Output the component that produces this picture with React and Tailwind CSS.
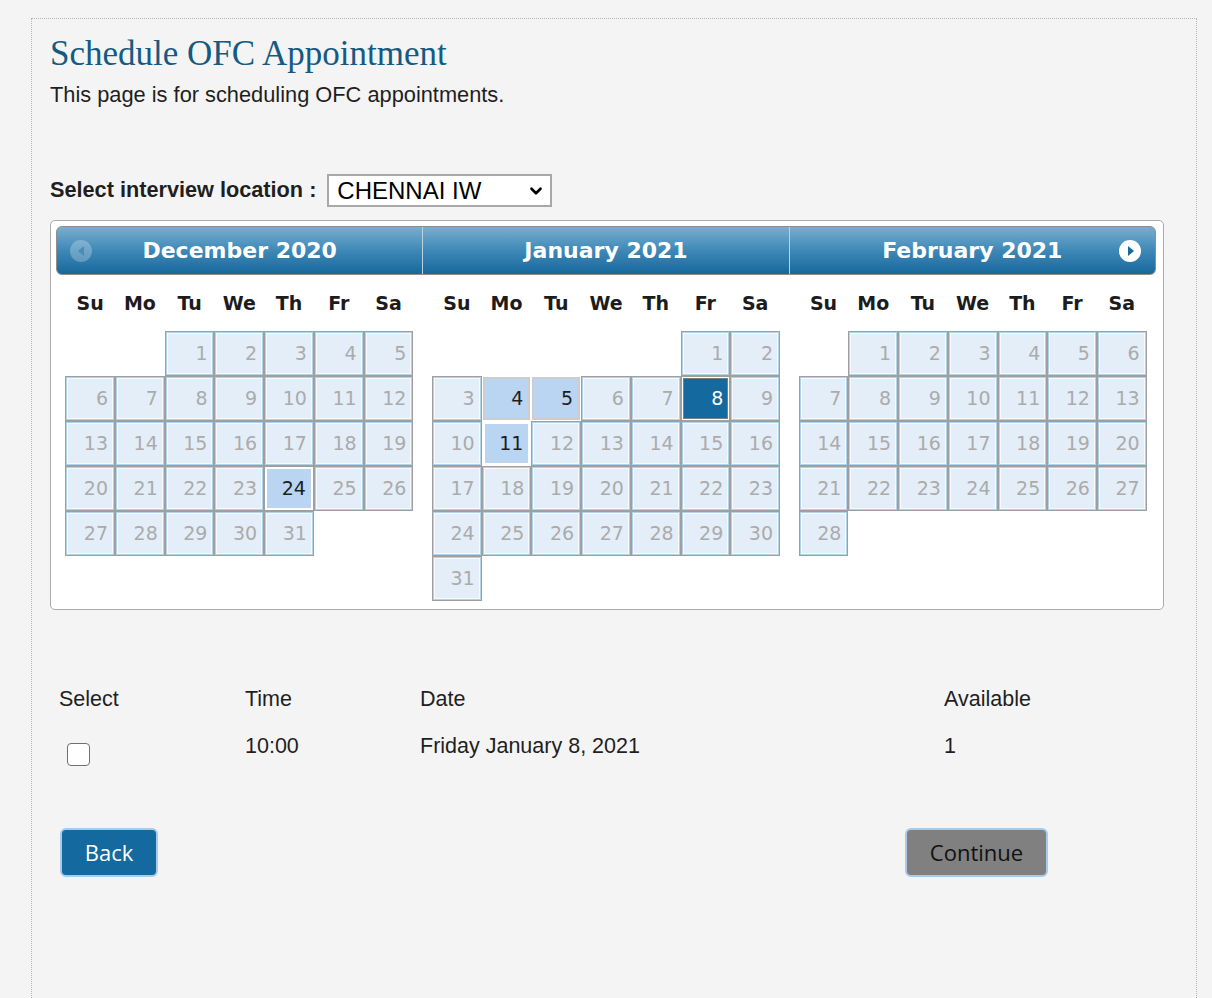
import React from "react";
import { ChevronDown } from "lucide-react";

const months = [
  { name: "December 2020", offset: 2, days: 31, marks: { 24: "dec" } },
  {
    name: "January 2021",
    offset: 5,
    days: 31,
    marks: { 4: "soft", 5: "soft", 8: "picked", 11: "open" },
  },
  { name: "February 2021", offset: 1, days: 28, marks: {} },
];

const weekDays = ["Su", "Mo", "Tu", "We", "Th", "Fr", "Sa"];

const DayCell = ({ day, mark }) => {
  const outer =
    mark === "soft" || mark === "open" ? "border-white" : "border-[#9f9f9f]";
  let inner =
    "border border-[#b2d3e5] bg-[#e4eef9] text-[#ababab] shadow-[inset_0_0_0_1px_#f6f9fd]";
  if (mark === "dec" || mark === "open")
    inner = "border-2 border-white bg-[#b9d5f2] text-[#1e1e1e]";
  if (mark === "soft")
    inner = "border-2 border-[#cdcdcd] bg-[#b9d5f2] text-[#1e1e1e]";
  if (mark === "picked")
    inner =
      "border border-white bg-[#14699e] text-white shadow-[inset_0_0_0_1px_#7d7d7d]";

  return (
    <div className={`border ${outer}`}>
      <div
        className={`h-full flex items-center justify-end pr-[5px] ${inner}`}
      >
        {day}
      </div>
    </div>
  );
};

const MonthGrid = ({ month }) => {
  const cells = [];
  for (let i = 0; i < month.offset; i++) cells.push(<div key={`e${i}`} />);
  for (let d = 1; d <= month.days; d++)
    cells.push(<DayCell key={d} day={d} mark={month.marks[d]} />);

  return (
    <div className="flex-1 flex flex-col items-center">
      <div className="grid grid-cols-7 w-[348px] h-[56px] items-center text-center font-bold text-[19px] text-[#1c1c1c]">
        {weekDays.map((w) => (
          <span key={w}>{w}</span>
        ))}
      </div>
      <div className="grid grid-cols-7 w-[348px] auto-rows-[45px] text-[19px]">
        {cells}
      </div>
    </div>
  );
};

const Calendar = () => (
  <div className="mt-[13px] w-[1114px] rounded-[5px] border border-[#ababab] bg-white pl-[5px] pr-[7px] pt-[5px] pb-[8px] font-['DejaVu_Sans',Verdana,sans-serif]">
    {/* Month header bar */}
    <div className="flex h-[49px] rounded-[6px] border border-[#8e8e8e] bg-linear-to-b from-[#77afce] via-[#3e88b7] via-50% to-[#15689b] overflow-hidden">
      {months.map((m, i) => (
        <div
          key={m.name}
          className={`relative flex-1 flex items-center justify-center text-white font-bold text-[22px] ${
            i > 0 ? "border-l border-[#b9d2e3]" : ""
          }`}
        >
          {i === 0 && (
            <span className="absolute left-[13px] top-1/2 -translate-y-1/2 w-[22px] h-[22px] rounded-full bg-white/25 flex items-center justify-center">
              <svg width="8" height="10" viewBox="0 0 8 10">
                <path d="M7 0 L1 5 L7 10 Z" fill="#3f86b3" opacity="0.8" />
              </svg>
            </span>
          )}
          {m.name}
          {i === 2 && (
            <span className="absolute right-[14px] top-1/2 -translate-y-1/2 w-[22px] h-[22px] rounded-full bg-white flex items-center justify-center">
              <svg width="8" height="10" viewBox="0 0 8 10" className="ml-[2px]">
                <path d="M1 0 L7 5 L1 10 Z" fill="#17699c" />
              </svg>
            </span>
          )}
        </div>
      ))}
    </div>

    {/* Month grids */}
    <div className="flex">
      {months.map((m) => (
        <MonthGrid key={m.name} month={m} />
      ))}
    </div>
  </div>
);

export default function App() {
  return (
    <div className="min-h-screen bg-[#f4f4f4] pt-[18px] pl-[31px] pr-[15px] overflow-hidden">
      <div className="min-h-[1000px] border border-dotted border-[#b4b4b4] pl-[18px] text-[#1f1f1f] font-['Liberation_Sans',Arial,sans-serif]">
        <h1 className="mt-[15px] h-[40px] leading-[40px] text-[35px] text-[#155a82] font-['Liberation_Serif',Georgia,serif]">
          Schedule OFC Appointment
        </h1>
        <p className="mt-[9px] leading-[24px] text-[21.8px]">
          This page is for scheduling OFC appointments.
        </p>

        {/* Location select */}
        <div className="mt-[67px] flex items-center h-[33px]">
          <span className="font-bold text-[21.7px] mr-[11px]">
            Select interview location :
          </span>
          <div className="w-[225px] h-[33px] border-2 border-[#a8a8a8] bg-white flex items-center pl-[8px] pr-[5px]">
            <span className="flex-1 text-[24px] text-black leading-none">
              CHENNAI IW
            </span>
            <ChevronDown size={18} strokeWidth={3.5} className="text-black" />
          </div>
        </div>

        <Calendar />

        {/* Slots table */}
        <div className="pl-[9px] text-[21.5px]">
          <div className="mt-[77px] grid grid-cols-[186px_175px_524px_1fr] leading-[24px]">
            <span>Select</span>
            <span>Time</span>
            <span>Date</span>
            <span>Available</span>
          </div>
          <div className="mt-[23px] grid grid-cols-[186px_175px_524px_1fr] leading-[24px] items-start">
            <div className="pl-[8px] pt-[9px]">
              <input
                type="checkbox"
                className="appearance-none block w-[23px] h-[23px] rounded-[4px] border border-[#707070] bg-white"
              />
            </div>
            <span>10:00</span>
            <span>Friday January 8, 2021</span>
            <span>1</span>
          </div>
        </div>

        {/* Buttons */}
        <div className="mt-[62px] ml-[10px] w-[988px] flex justify-between font-['Open_Sans',sans-serif] text-[22px]">
          <button className="w-[98px] h-[49px] rounded-[6px] border-2 border-[#a9cbea] bg-[#14699e] text-white">
            Back
          </button>
          <button className="w-[143px] h-[49px] rounded-[6px] border-2 border-[#a9cbea] bg-[#808080] text-[#111]">
            Continue
          </button>
        </div>
      </div>
    </div>
  );
}
